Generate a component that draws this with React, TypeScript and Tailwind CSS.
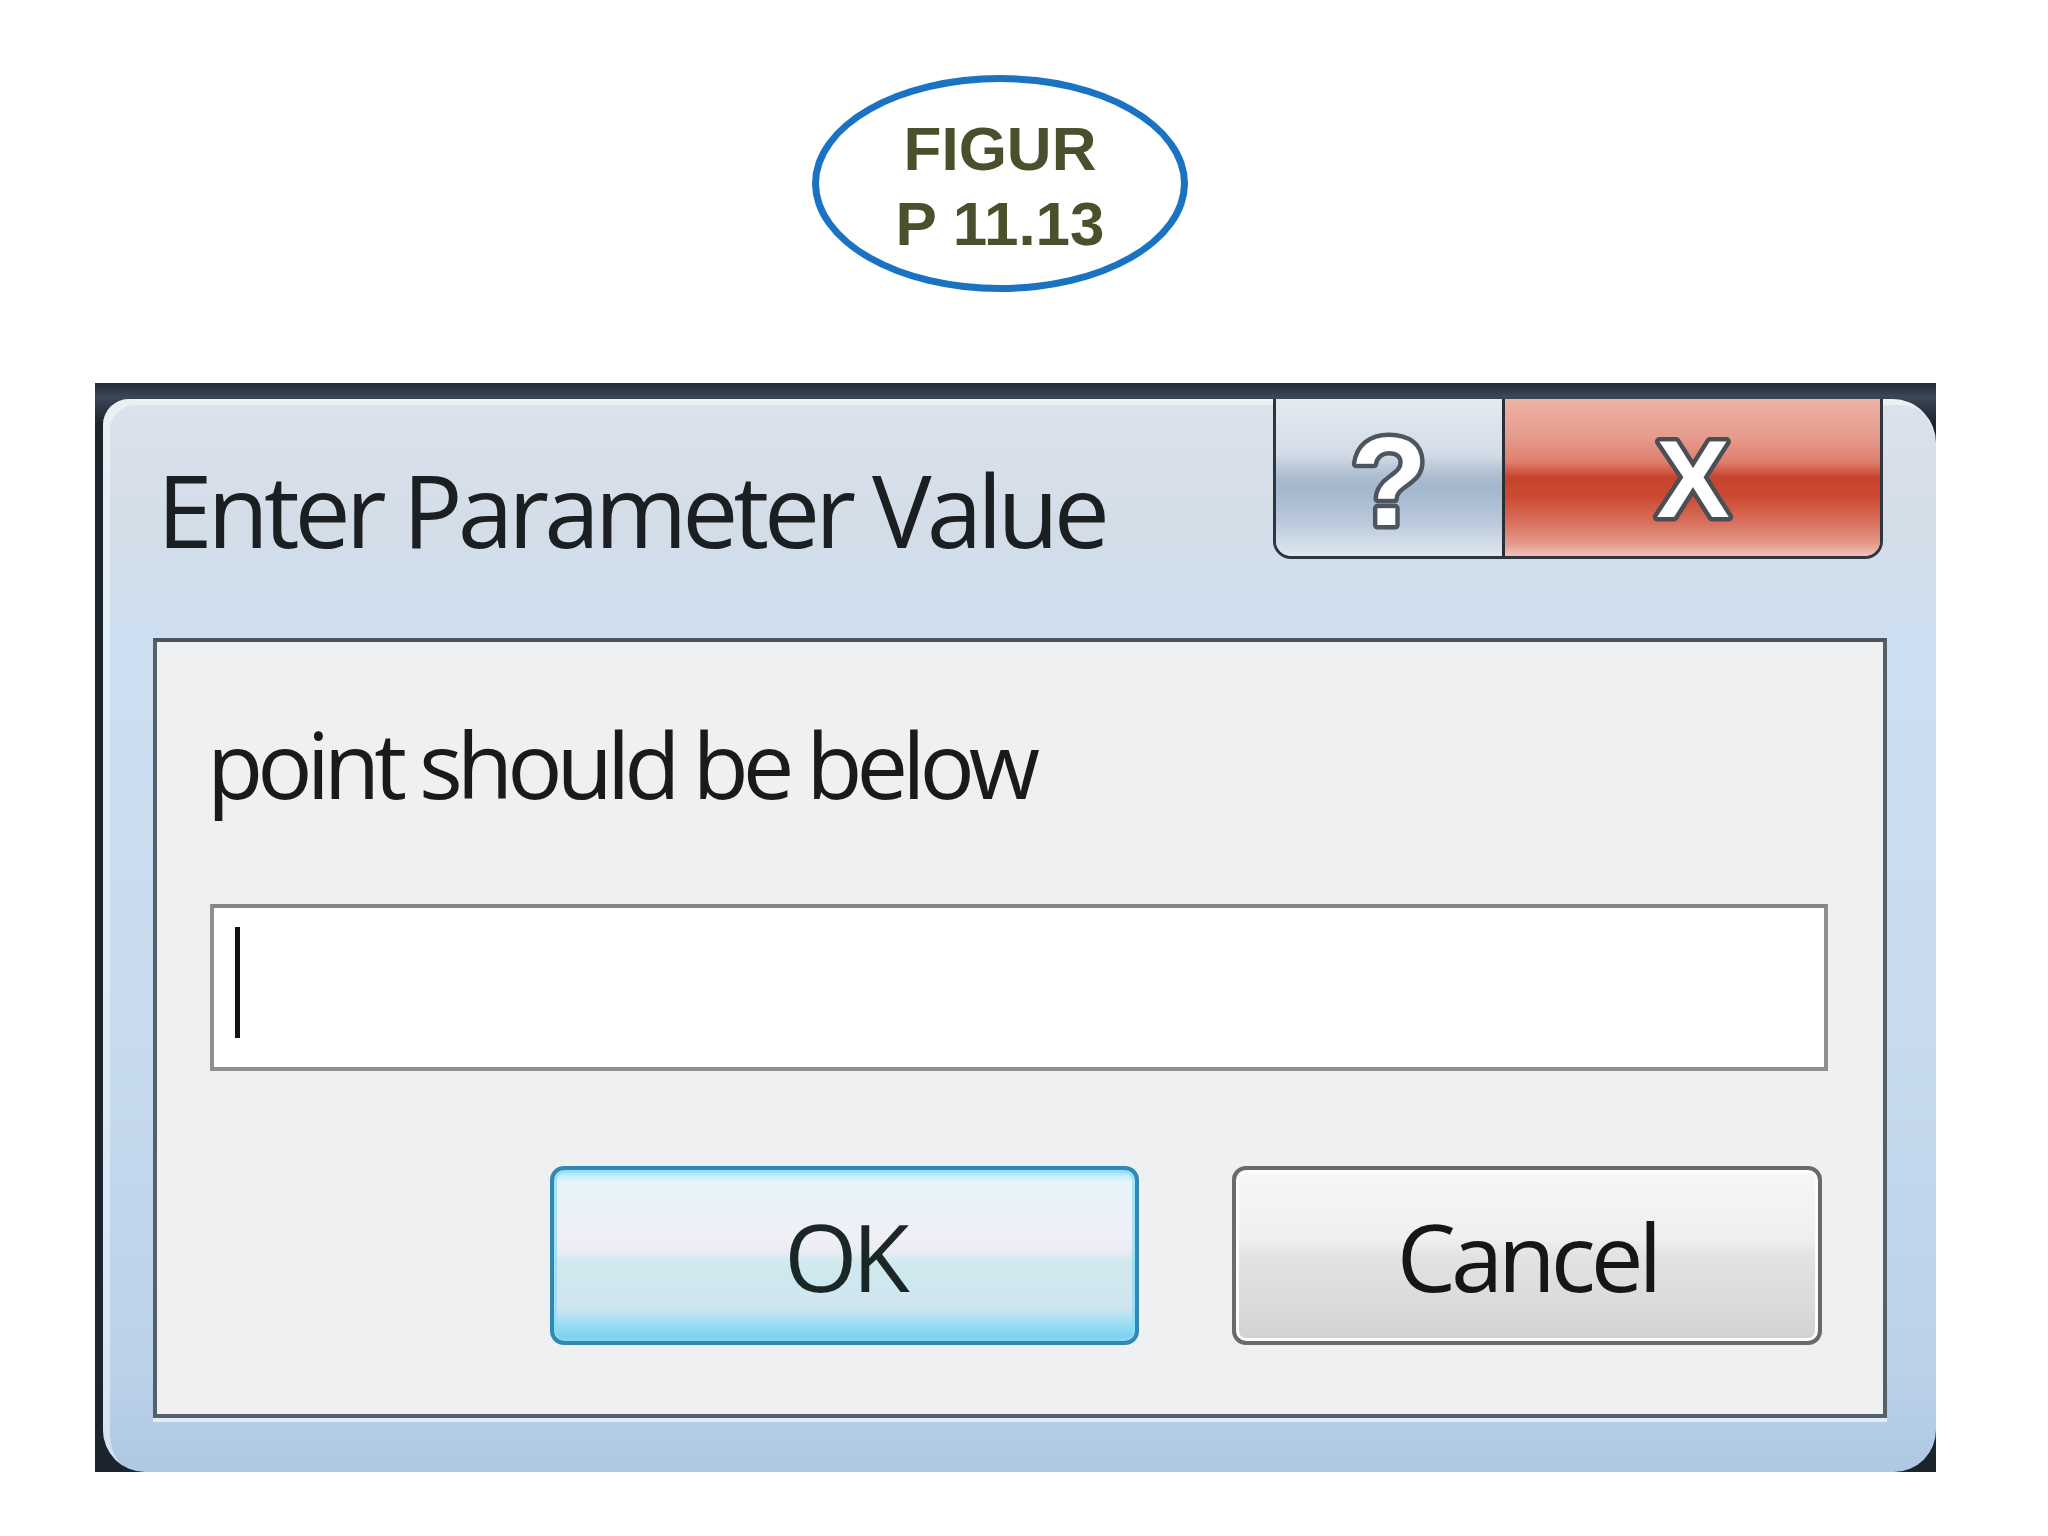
const sans = "font-['Open_Sans','Noto_Sans',sans-serif]";

function CaptionButtons() {
  return (
    <div className="flex w-[610px] h-[160px] border-x-[3px] border-b-[3px] border-[#2f3640] rounded-b-[18px] overflow-hidden">
      <div className="w-[226px] h-full flex items-center justify-center bg-[linear-gradient(to_bottom,#e4eaf1_0%,#d3dce7_35%,#aabccf_50%,#a3b7cd_58%,#bccbdc_80%,#dfe8f2_100%)]">
        <svg width="90" height="150" viewBox="0 0 90 150">
          <text
            x="45"
            y="122"
            textAnchor="middle"
            fontFamily="'Liberation Sans', Arial, sans-serif"
            fontWeight="700"
            fontSize="126"
            fill="#ffffff"
            stroke="#4d5560"
            strokeWidth="9"
            strokeLinejoin="round"
            paintOrder="stroke"
          >
            ?
          </text>
        </svg>
      </div>
      <div className="w-[3px] h-full bg-[#2b2f36]" />
      <div className="flex-1 h-full flex items-center justify-center bg-[linear-gradient(to_bottom,#eeb3a7_0%,#e69a8b_25%,#df7f6c_40%,#c7432d_50%,#cc4a33_62%,#d86f5b_78%,#e5998a_92%,#f2c3b8_100%)]">
        <svg width="100" height="130" viewBox="0 0 100 130">
          <text
            x="50"
            y="104"
            textAnchor="middle"
            fontFamily="'Liberation Sans', Arial, sans-serif"
            fontWeight="700"
            fontSize="110"
            fill="#ffffff"
            stroke="#4a4f56"
            strokeWidth="9"
            strokeLinejoin="round"
            paintOrder="stroke"
          >
            X
          </text>
        </svg>
      </div>
    </div>
  );
}

function Dialog() {
  return (
    <div className="ml-[95px] mt-[91px] w-[1841px] h-[1089px] pl-[8px] pt-[16px] bg-[linear-gradient(to_bottom,#222b36_0px,#3b4757_14px,#1c242d_40px,#1c242d_100%)]">
      <div className="h-full flex flex-col pl-[50px] pr-[49px] rounded-tl-[26px] rounded-tr-[44px] rounded-b-[42px] bg-[linear-gradient(to_bottom,#dbe3ec_0%,#d3dde8_12%,#cddff1_22%,#c8dbee_60%,#bcd2e9_90%,#afc8e3_100%)] shadow-[inset_7px_6px_0_rgba(255,255,255,0.45)]">
        <div className="h-[239px] flex items-start justify-between pl-[4px] pr-[4px]">
          <div className={`${sans} mt-[60px] text-[100px] leading-[100px] tracking-[-5px] text-[#1c1f22]`}>
            Enter Parameter Value
          </div>
          <CaptionButtons />
        </div>

        <div className="h-[780px] flex flex-col border-4 border-[#55606b] border-t-[#4a5560] bg-[#eff0f2] shadow-[0_4px_0_rgba(255,255,255,0.6)]">
          <div className={`${sans} mt-[76px] pl-[50px] text-[92px] leading-[92px] tracking-[-6px] text-[#1a1a1a]`}>
            point should be below
          </div>

          <div className="mt-[94px] ml-[53px] mr-[55px] h-[167px] border-4 border-[#8f8f8f] border-t-[#858585] bg-white pl-[21px] pt-[19px]">
            <div className="w-[5px] h-[111px] bg-[#111111]" />
          </div>

          <div className="mt-[95px] flex justify-end gap-[93px] pr-[61px]">
            <div className="w-[589px] h-[179px] rounded-[14px] border-4 border-[#3189b3] flex items-center justify-center bg-[linear-gradient(to_bottom,#9fe2f7_0%,#e6f5fb_7%,#f1eef6_40%,#e9ecf3_48%,#cfe9ef_54%,#cfe6ee_80%,#93dcf5_92%,#74cdee_100%)] shadow-[inset_0_0_0_3px_rgba(140,220,248,0.7)]">
              <span className={`${sans} text-[94px] leading-[94px] tracking-[-5px] text-[#1b2626]`}>OK</span>
            </div>
            <div className="w-[590px] h-[179px] rounded-[14px] border-4 border-[#6a6a6a] flex items-center justify-center bg-[linear-gradient(to_bottom,#f7f7f7_0%,#efefef_40%,#e3e3e3_50%,#dadada_80%,#d2d2d2_100%)] shadow-[inset_0_0_0_3px_#fbfbfb]">
              <span className={`${sans} text-[94px] leading-[94px] tracking-[-5px] text-[#161616]`}>Cancel</span>
            </div>
          </div>
        </div>
      </div>
    </div>
  );
}

export default function App() {
  return (
    <div className="w-[2048px] h-[1536px] bg-white overflow-hidden">
      <div className="pt-[75px] pl-[812px]">
        <div className="w-[376px] h-[217px] rounded-[50%] border-[7px] border-[#1a72c2] flex items-center justify-center">
          <div className="mt-[4px] text-center font-['Liberation_Sans',Arial,sans-serif] font-bold text-[62px] leading-[75px] text-[#4b4f2b]">
            <div>FIGUR</div>
            <div>P 11.13</div>
          </div>
        </div>
      </div>
      <Dialog />
    </div>
  );
}
